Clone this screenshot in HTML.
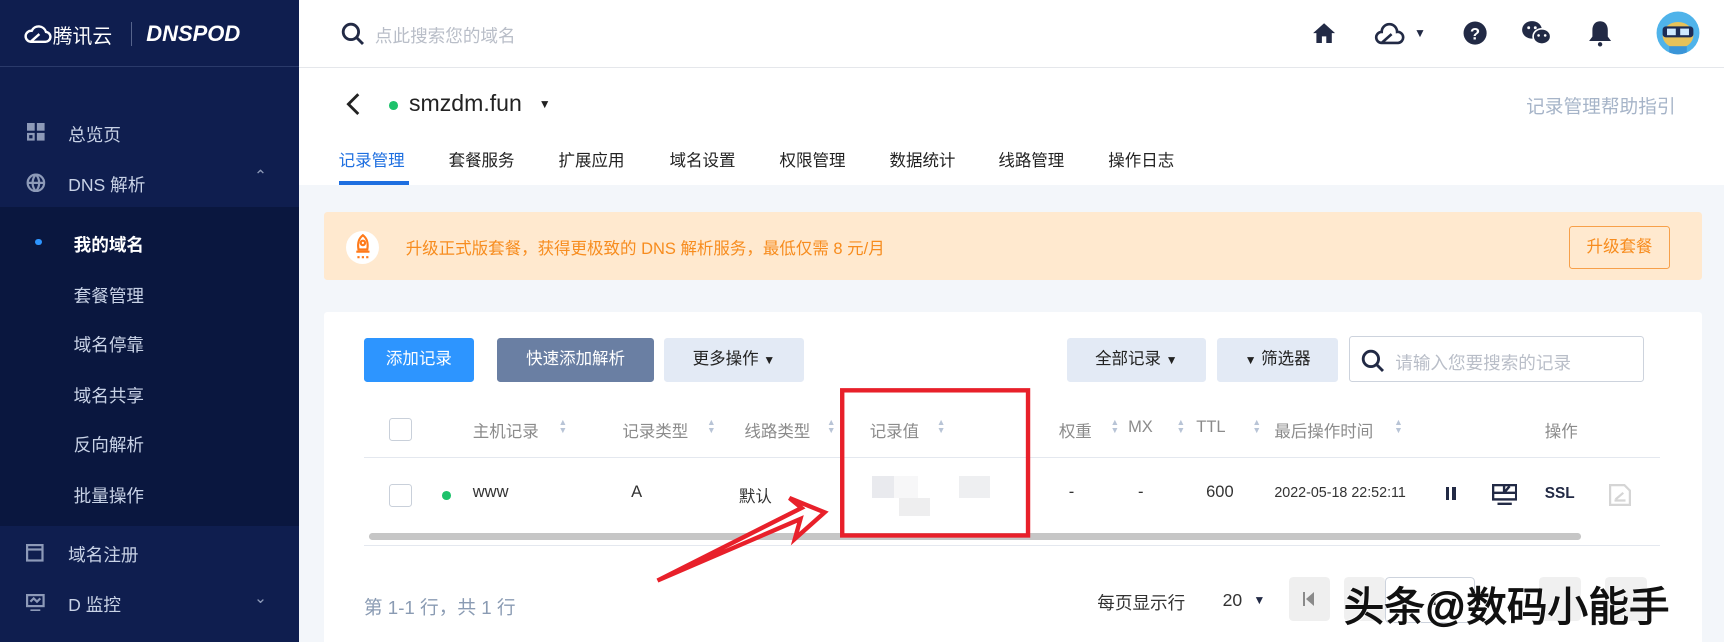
<!DOCTYPE html>
<html><head><meta charset="utf-8"><style>
html,body{margin:0;padding:0;width:1724px;height:642px;overflow:hidden;background:#f3f6fa}
#w{zoom:1.0995;width:1568px;height:584px;position:relative;font-family:"Liberation Sans","Noto Sans CJK SC",sans-serif;overflow:hidden}
.a{position:absolute;white-space:nowrap}
.sb{left:0;top:0;width:272px;height:584px;background:#0f1e4f}
.mi{color:#c8d2e6;font-size:16px}
.tab{font-size:15px;color:#222;top:134px}
.btn{border-radius:3px;font-size:15px;text-align:center;line-height:40px;height:40px;top:307px}
.th{top:380px;font-size:15px;color:#8b8b8b}
.td{top:439px;font-size:15px;color:#333}
.srt{font-size:8px;color:#b8c4d6;line-height:7px;top:381px}
.cb{width:19px;height:19px;border:1px solid #c9d0da;border-radius:3px;background:#fff}
</style></head><body><div id="w">
<div class="a sb"></div>
<div class="a" style="left:0;top:60px;width:272px;height:1px;background:#2a3a6a"></div>
<svg class="a" style="left:22px;top:20px" width="26" height="22" viewBox="0 0 26 22"><path d="M6 18 A5 5 0 0 1 7 8 A7 7 0 0 1 20 9 A4.5 4.5 0 0 1 19 18 Z M6 18 L14 11" fill="none" stroke="#fff" stroke-width="2.2"/></svg>
<div class="a" style="left:48px;top:18px;color:#fff;font-size:18px">腾讯云</div>
<div class="a" style="left:119px;top:20px;width:1px;height:22px;background:#56648c"></div>
<div class="a" style="left:133px;top:19px;color:#fff;font-size:20px;font-weight:bold;font-style:italic;letter-spacing:0px">DNSPOD</div>
<svg class="a" style="left:25px;top:112px" width="16" height="16"><rect x="0" y="0" width="7" height="7" fill="#8d9ab8"/><rect x="9" y="0" width="7" height="7" fill="#8d9ab8"/><rect x="0" y="9" width="7" height="7" fill="#8d9ab8"/><rect x="9" y="9" width="7" height="7" fill="#8d9ab8"/><rect x="2" y="11" width="3" height="3" fill="#0f1e4f"/></svg>
<div class="a mi" style="left:62px;top:111px">总览页</div>
<svg class="a" style="left:24px;top:157px" width="18" height="18" viewBox="0 0 18 18" fill="none" stroke="#8d9ab8" stroke-width="2"><circle cx="9" cy="9" r="7.5"/><path d="M1.5 9h15M9 1.5c-4 4-4 11 0 15M9 1.5c4 4 4 11 0 15"/></svg>
<div class="a mi" style="left:62px;top:156px">DNS 解析</div>
<div class="a" style="left:231px;top:152px;color:#8d9ab8;font-size:14px">&#8963;</div>
<div class="a" style="left:0;top:188px;width:272px;height:290px;background:#0a173f"></div>
<div class="a" style="left:32px;top:217px;width:6px;height:6px;border-radius:3px;background:#2d95ff"></div>
<div class="a" style="left:67px;top:211px;color:#fff;font-size:16px;font-weight:bold">我的域名</div>
<div class="a mi" style="left:67px;top:257px">套餐管理</div>
<div class="a mi" style="left:67px;top:302px">域名停靠</div>
<div class="a mi" style="left:67px;top:348px">域名共享</div>
<div class="a mi" style="left:67px;top:393px">反向解析</div>
<div class="a mi" style="left:67px;top:439px">批量操作</div>
<svg class="a" style="left:24px;top:495px" width="16" height="16" fill="none" stroke="#8d9ab8" stroke-width="2"><rect x="1" y="1" width="14" height="14"/><path d="M1 5h14"/></svg>
<div class="a mi" style="left:62px;top:493px">域名注册</div>
<svg class="a" style="left:24px;top:540px" width="17" height="16" fill="none" stroke="#8d9ab8" stroke-width="2"><rect x="1" y="1" width="15" height="10"/><path d="M4 15h9M4 7l3-3 3 3 3-3"/></svg>
<div class="a mi" style="left:62px;top:538px">D 监控</div>
<div class="a" style="left:231px;top:536px;color:#8d9ab8;font-size:14px">&#8964;</div>

<div class="a" style="left:272px;top:0;width:1296px;height:168px;background:#fff"></div>
<div class="a" style="left:272px;top:61px;width:1296px;height:1px;background:#e5e7eb"></div>
<svg class="a" style="left:310px;top:20px" width="22" height="22" fill="none" stroke="#222a45" stroke-width="2.6"><circle cx="9" cy="9" r="7"/><path d="M14 14l6 6"/></svg>
<div class="a" style="left:341px;top:21px;color:#b9bec8;font-size:16px">点此搜索您的域名</div>
<svg class="a" style="left:1193px;top:19px" width="22" height="22" viewBox="0 0 22 22"><path d="M11 2 L21 11 H18 V20 H13 V14 H9 V20 H4 V11 H1 Z" fill="#222a45"/></svg>
<svg class="a" style="left:1250px;top:20px" width="30" height="22" viewBox="0 0 30 22"><path d="M7 19 A5 5 0 0 1 7 9 A7 7 0 0 1 21 9 A5 5 0 0 1 22 19 Z M7 19 L16 11" fill="none" stroke="#222a45" stroke-width="2.4"/></svg>
<div class="a" style="left:1286px;top:24px;font-size:11px;color:#222a45">▼</div>
<svg class="a" style="left:1331px;top:19px" width="22" height="22"><circle cx="11" cy="11" r="10.5" fill="#222a45"/><text x="11" y="17" text-anchor="middle" font-size="15" font-weight="bold" fill="#fff" font-family="Liberation Sans">?</text></svg>
<svg class="a" style="left:1383px;top:18px" width="28" height="24" viewBox="0 0 28 24"><ellipse cx="10" cy="9" rx="9" ry="8" fill="#222a45"/><ellipse cx="19" cy="15" rx="8" ry="7" fill="#222a45" stroke="#fff" stroke-width="1.5"/><circle cx="7" cy="7" r="1.3" fill="#fff"/><circle cx="13" cy="7" r="1.3" fill="#fff"/><circle cx="16" cy="14" r="1.2" fill="#fff"/><circle cx="22" cy="14" r="1.2" fill="#fff"/></svg>
<svg class="a" style="left:1444px;top:17px" width="22" height="26" viewBox="0 0 22 26"><path d="M11 2c-5 0-7 4-7 8v6l-3 4h20l-3-4v-6c0-4-2-8-7-8z" fill="#222a45"/><circle cx="11" cy="23" r="2" fill="#222a45"/></svg>
<svg class="a" style="left:1506px;top:10px" width="40" height="40"><defs><clipPath id="c"><circle cx="20" cy="20" r="19.5"/></clipPath></defs><circle cx="20" cy="20" r="19.5" fill="#4fb3ea"/><g clip-path="url(#c)"><ellipse cx="20" cy="22" rx="14" ry="12" fill="#e7c25a"/><rect x="6" y="14" width="28" height="10" rx="3" fill="#1d2c55"/><rect x="10" y="16" width="8" height="6" fill="#cfe9ff"/><rect x="22" y="16" width="8" height="6" fill="#cfe9ff"/><rect x="12" y="32" width="16" height="8" fill="#3a95d8"/></g></svg>

<svg class="a" style="left:313px;top:84px" width="16" height="22" fill="none" stroke="#222" stroke-width="2.6"><path d="M13 2L4 11l9 9"/></svg>
<div class="a" style="left:354px;top:92px;width:8px;height:8px;border-radius:4px;background:#1ec26b"></div>
<div class="a" style="left:372px;top:82px;font-size:21px;color:#222">smzdm.fun</div>
<div class="a" style="left:490px;top:88px;font-size:11px;color:#222">▼</div>
<div class="a" style="left:1388px;top:84px;font-size:17px;color:#a6b4c8">记录管理帮助指引</div>
<div class="a tab" style="left:308px;color:#1e6fe0">记录管理</div>
<div class="a" style="left:308px;top:165px;width:64px;height:3px;background:#1e6fe0"></div>
<div class="a tab" style="left:408px">套餐服务</div>
<div class="a tab" style="left:508px">扩展应用</div>
<div class="a tab" style="left:609px">域名设置</div>
<div class="a tab" style="left:709px">权限管理</div>
<div class="a tab" style="left:809px">数据统计</div>
<div class="a tab" style="left:908px">线路管理</div>
<div class="a tab" style="left:1008px">操作日志</div>

<div class="a" style="left:295px;top:193px;width:1253px;height:62px;background:#ffe9cf;border-radius:3px"></div>
<div class="a" style="left:315px;top:210px;width:30px;height:30px;border-radius:15px;background:#fff"></div>
<svg class="a" style="left:321px;top:212px" width="18" height="26" viewBox="0 0 18 26" fill="none" stroke="#ff7a1a" stroke-width="2"><path d="M9 2c4 3 5 7 4 13H5C4 9 5 5 9 2z"/><circle cx="9" cy="9" r="2"/><path d="M3 17h12M5 21v2M9 21v2M13 21v2"/></svg>
<div class="a" style="left:369px;top:214px;font-size:15px;color:#f78c1e">升级正式版套餐，获得更极致的 DNS 解析服务，最低仅需 8 元/月</div>
<div class="a" style="left:1427px;top:206px;width:90px;height:37px;border:1px solid #f7a04a;border-radius:3px;color:#f78c1e;font-size:15px;text-align:center;line-height:37px">升级套餐</div>

<div class="a" style="left:295px;top:284px;width:1253px;height:310px;background:#fff;border-radius:3px"></div>
<div class="a btn" style="left:331px;width:100px;background:#2d95ff;color:#fff">添加记录</div>
<div class="a btn" style="left:452px;width:143px;background:#6a7fa3;color:#fff">快速添加解析</div>
<div class="a btn" style="left:604px;width:127px;background:#e3eaf5;color:#222">更多操作 <span style="font-size:11px">▼</span></div>
<div class="a btn" style="left:970px;width:127px;background:#e3eaf5;color:#222">全部记录 <span style="font-size:11px">▼</span></div>
<div class="a btn" style="left:1107px;width:110px;background:#e3eaf5;color:#222"><span style="font-size:11px">▼</span> 筛选器</div>
<div class="a" style="left:1227px;top:306px;width:266px;height:40px;border:1px solid #cdd3dd;border-radius:3px;background:#fff"></div>
<svg class="a" style="left:1238px;top:317px" width="22" height="22" fill="none" stroke="#222a45" stroke-width="2.6"><circle cx="9" cy="9" r="7"/><path d="M14 14l6 6"/></svg>
<div class="a" style="left:1269px;top:318px;color:#b9bec8;font-size:16px">请输入您要搜索的记录</div>

<div class="a cb" style="left:354px;top:380px"></div>
<div class="a th" style="left:430px">主机记录</div><div class="a srt" style="left:508px">▲<br>▼</div>
<div class="a th" style="left:566px">记录类型</div><div class="a srt" style="left:643px">▲<br>▼</div>
<div class="a th" style="left:677px">线路类型</div><div class="a srt" style="left:752px">▲<br>▼</div>
<div class="a th" style="left:791px">记录值</div><div class="a srt" style="left:852px">▲<br>▼</div>
<div class="a th" style="left:963px">权重</div><div class="a srt" style="left:1010px">▲<br>▼</div>
<div class="a th" style="left:1026px">MX</div><div class="a srt" style="left:1070px">▲<br>▼</div>
<div class="a th" style="left:1088px">TTL</div><div class="a srt" style="left:1139px">▲<br>▼</div>
<div class="a th" style="left:1159px">最后操作时间</div><div class="a srt" style="left:1268px">▲<br>▼</div>
<div class="a th" style="left:1405px">操作</div>
<div class="a" style="left:331px;top:416px;width:1179px;height:1px;background:#e4e8ef"></div>

<div class="a cb" style="left:354px;top:440px"></div>
<div class="a" style="left:402px;top:447px;width:8px;height:8px;border-radius:4px;background:#1ec26b"></div>
<div class="a td" style="left:430px">www</div>
<div class="a td" style="left:574px">A</div>
<div class="a td" style="left:672px">默认</div>
<div class="a" style="left:793px;top:433px;width:20px;height:20px;background:#e9eaee"></div>
<div class="a" style="left:813px;top:433px;width:22px;height:20px;background:#f7f7f8"></div>
<div class="a" style="left:818px;top:453px;width:28px;height:16px;background:#eeeeef"></div>
<div class="a" style="left:872px;top:433px;width:28px;height:20px;background:#eeeff1"></div>
<div class="a td" style="left:972px">-</div>
<div class="a td" style="left:1035px">-</div>
<div class="a td" style="left:1097px">600</div>
<div class="a" style="left:1159px;top:441px;font-size:13px;color:#333">2022-05-18 22:52:11</div>
<div class="a" style="left:1315px;top:443px;width:3px;height:12px;background:#222a45"></div>
<div class="a" style="left:1321px;top:443px;width:3px;height:12px;background:#222a45"></div>
<svg class="a" style="left:1357px;top:440px" width="23" height="20" fill="none" stroke="#222a45" stroke-width="2.2"><rect x="1" y="1" width="21" height="13"/><path d="M1 8h21M11 1v7M11 8l5-6M5 18h13"/></svg>
<div class="a" style="left:1405px;top:441px;font-size:14px;font-weight:bold;color:#222a45">SSL</div>
<svg class="a" style="left:1463px;top:440px" width="20" height="20" fill="none" stroke="#d5d5d5" stroke-width="2"><path d="M1 1h13l5 5v13H1z"/><path d="M6 14l7-6M5 15h10"/></svg>
<div class="a" style="left:336px;top:485px;width:1102px;height:6px;border-radius:3px;background:#c6c6c6"></div>
<div class="a" style="left:331px;top:496px;width:1179px;height:1px;background:#e4e8ef"></div>

<svg class="a" style="left:0;top:0" width="1568" height="584"><rect x="766" y="355" width="169" height="132" fill="none" stroke="#e8202a" stroke-width="4"/><path d="M598 528 L728 472 L723 490 L750 466 L718 453 L729 462 Z" fill="#fff" stroke="#e8202a" stroke-width="4" stroke-linejoin="miter"/></svg>

<div class="a" style="left:331px;top:539px;font-size:17px;color:#8a9bb3">第 1-1 行，共 1 行</div>
<div class="a" style="left:998px;top:537px;font-size:16px;color:#333">每页显示行</div>
<div class="a" style="left:1112px;top:537px;font-size:16px;color:#333">20</div>
<div class="a" style="left:1140px;top:539px;font-size:11px;color:#222a45">▼</div>
<div class="a" style="left:1172px;top:525px;width:38px;height:40px;background:#efefef;border-radius:4px"></div>
<div class="a" style="left:1185px;top:538px;width:2px;height:13px;background:#8a8a8a"></div>
<div class="a" style="left:1188px;top:538px;width:0;height:0;border-top:6.5px solid transparent;border-bottom:6.5px solid transparent;border-right:8px solid #8a8a8a"></div>
<div class="a" style="left:1222px;top:525px;width:38px;height:40px;background:#f0f0f0;border-radius:4px"></div>
<div class="a" style="left:1400px;top:525px;width:38px;height:40px;background:#f0f0f0;border-radius:4px"></div>
<div class="a" style="left:1460px;top:525px;width:38px;height:40px;background:#f0f0f0;border-radius:4px"></div>
<div class="a" style="left:1260px;top:525px;width:80px;height:40px;border:1px solid #cdd3dd;border-radius:4px;background:#fff"></div>
<div class="a" style="left:1300px;top:536px;font-size:16px;color:#333">1</div>
<div class="a" style="left:1222px;top:522px;font-size:37px;color:#111;-webkit-text-stroke:1px #111;text-shadow:1px 1px 0 #fff,-1px -1px 0 #fff">头条@数码小能手</div>
</div></body></html>
